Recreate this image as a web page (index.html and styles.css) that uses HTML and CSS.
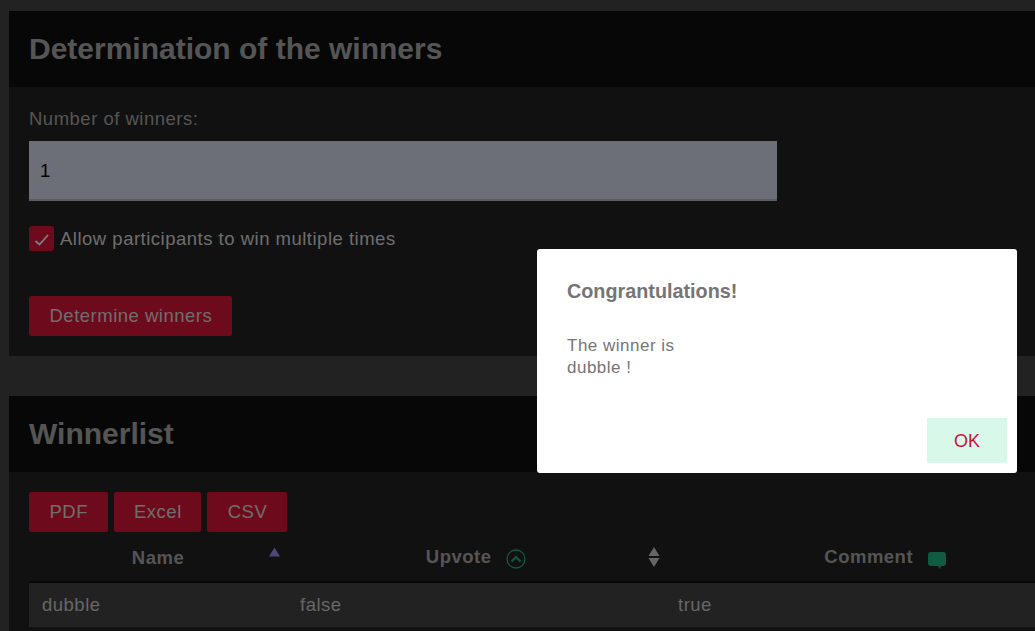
FILE: index.html
```html
<!DOCTYPE html>
<html lang="en">
<head>
    <meta charset="UTF-8">
    <meta name="viewport" content="width=device-width, initial-scale=1.0">
    <title>Determination of the winners</title>
    <link rel="stylesheet" href="styles.css">
</head>
<body>
    <div class="page">
        <!-- Winner settings -->
        <section class="card">
            <h2 class="card-title">Determination of the winners</h2>
            <div class="card-body settings">
                <label class="field-label" for="winners">Number of winners:</label>
                <input class="field-input" id="winners" type="text" value="1">
                <label class="check-row">
                    <span class="check-box">
                        <svg viewBox="0 0 25 25" width="25" height="25"><path d="M6.500 15l4 3.500 8.500-9.500" fill="none" stroke="#fff" stroke-width="1.8"/></svg>
                    </span>
                    Allow participants to win multiple times
                </label>
                <div class="settings-action">
                    <button class="btn">Determine winners</button>
                </div>
            </div>
        </section>

        <!-- Winner table -->
        <section class="card">
            <h2 class="card-title">Winnerlist</h2>
            <div class="card-body list">
                <div class="export-btns">
                    <button class="btn">PDF</button>
                    <button class="btn">Excel</button>
                    <button class="btn">CSV</button>
                </div>
                <table class="winners">
                    <colgroup>
                        <col class="col-name">
                        <col class="col-upvote">
                        <col class="col-comment">
                    </colgroup>
                    <thead>
                        <tr>
                            <th>
                                Name
                                <svg class="sort-icon sort-name" viewBox="0 0 12 10" width="11" height="10"><path d="M6 0l6 10H0z" fill="#9a90f0"/></svg>
                            </th>
                            <th>
                                Upvote
                                <svg class="head-icon" viewBox="0 0 20 20" width="20" height="20"><circle cx="10" cy="10" r="9" fill="none" stroke="#22b584" stroke-width="1.3"/><path d="M5.500 12.500L10 8l4.500 4.500" fill="none" stroke="#22b584" stroke-width="2"/></svg>
                                <svg class="sort-icon sort-upvote" viewBox="0 0 12 20" width="12" height="20"><path d="M6 0l5.500 9H.5zM6 20l5.500-9H.5z" fill="#ccc"/></svg>
                            </th>
                            <th>
                                Comment
                                <svg class="head-icon" viewBox="0 0 18 17" width="18" height="17"><path d="M3 0h12a3 3 0 0 1 3 3v8a3 3 0 0 1-3 3h-2l-1 3-2-3H3a3 3 0 0 1-3-3V3a3 3 0 0 1 3-3z" fill="#1fb885"/></svg>
                            </th>
                        </tr>
                    </thead>
                    <tbody>
                        <tr>
                            <td>dubble</td>
                            <td>false</td>
                            <td>true</td>
                        </tr>
                    </tbody>
                </table>
            </div>
        </section>
    </div>

    <!-- Result dialog -->
    <div class="overlay"></div>
    <div class="modal">
        <h3 class="modal-title">Congrantulations!</h3>
        <p class="modal-text">The winner is<br>dubble !</p>
        <div class="modal-actions">
            <button class="ok-btn">OK</button>
        </div>
    </div>
</body>
</html>
```

FILE: styles.css
```css
html, body {
    height: 100%;
    overflow: hidden;
}

body {
    margin: 0;
    background-color: #444;
    font-family: "Liberation Sans", Arial, sans-serif;
    font-size: 18.5px;
    letter-spacing: 0.5px;
    color: #aaa;
}

/* The cards run on past the right and bottom edge of the window */
.page {
    box-sizing: border-box;
    height: 100%;
    margin-left: 9px;
    padding-top: 11px;
    overflow: hidden;
}

.card {
    width: 1116px;
    background-color: #222;
    margin-bottom: 40px;
}

.card-title {
    margin: 0;
    height: 76px;
    padding-left: 20px;
    background-color: #0e0e0e;
    font-size: 30px;
    line-height: 75px;
    font-weight: bold;
    letter-spacing: 0;
    color: #aaa;
}

.card-body {
    padding: 20px;
}

/* Settings card */
.settings {
    height: 269px;
    box-sizing: border-box;
}

.field-label {
    display: block;
    height: 34px;
    line-height: 24px;
}

.field-input {
    display: block;
    box-sizing: border-box;
    width: 748px;
    height: 60px;
    padding: 1px 11px 0;
    border: none;
    border-bottom: 2px solid #bbb;
    background-color: #d8dfee;
    font-family: inherit;
    font-size: 18.5px;
    color: #000;
}

.check-row {
    display: flex;
    align-items: center;
    gap: 6px;
    margin-top: 25px;
    height: 25px;
    color: #ddd;
}

.check-box {
    display: block;
    width: 25px;
    height: 25px;
    border-radius: 3px;
    background-color: #da1438;
}

.settings-action {
    margin-top: 45px;
}

.btn {
    height: 40px;
    padding: 0 19.5px 0 20.5px;
    border: none;
    border-radius: 2px;
    background-color: #da1438;
    font-family: inherit;
    font-size: 18.5px;
    letter-spacing: 0.5px;
    color: #ddd;
}

/* Winner list card */
.export-btns {
    display: flex;
    gap: 6px;
}

.winners {
    table-layout: fixed;
    border-collapse: collapse;
    width: 1076px;
    margin-top: 4px;
}

.col-name {
    width: 258px;
}

.col-upvote {
    width: 378px;
}

.col-comment {
    width: 440px;
}

.winners th {
    position: relative;
    height: 43px;
    padding: 0 0 2px;
    border-bottom: 2px solid #0e0e0e;
    text-align: center;
    font-weight: bold;
    color: #aaa;
}

.winners td {
    height: 44px;
    padding: 0 13px;
    background-color: #444;
    color: #ccc;
}

.head-icon {
    margin-left: 9px;
    vertical-align: -6px;
}

.sort-icon {
    position: absolute;
}

.sort-name {
    top: 11px;
    right: 7px;
}

.sort-upvote {
    top: 11px;
    right: 5px;
}

/* Dialog */
.overlay {
    position: fixed;
    inset: 0;
    background-color: rgba(0, 0, 0, 0.5);
}

.modal {
    position: fixed;
    left: 537px;
    top: 249px;
    box-sizing: border-box;
    width: 480px;
    height: 224px;
    padding: 30px 10px 10px 30px;
    border-radius: 3px;
    background-color: #fff;
    color: #757575;
    letter-spacing: 0;
    display: flex;
    flex-direction: column;
}

.modal-title {
    margin: 0;
    font-size: 19.8px;
    line-height: 24px;
}

.modal-text {
    margin: 32px 0 0;
    font-size: 17px;
    line-height: 22px;
    letter-spacing: 0.5px;
}

.modal-actions {
    margin-top: auto;
    display: flex;
    justify-content: flex-end;
}

.ok-btn {
    width: 80px;
    height: 45px;
    padding: 1px 0 0;
    border: none;
    background-color: #d8f9ea;
    font-family: inherit;
    font-size: 18px;
    color: #d0103a;
}
```
